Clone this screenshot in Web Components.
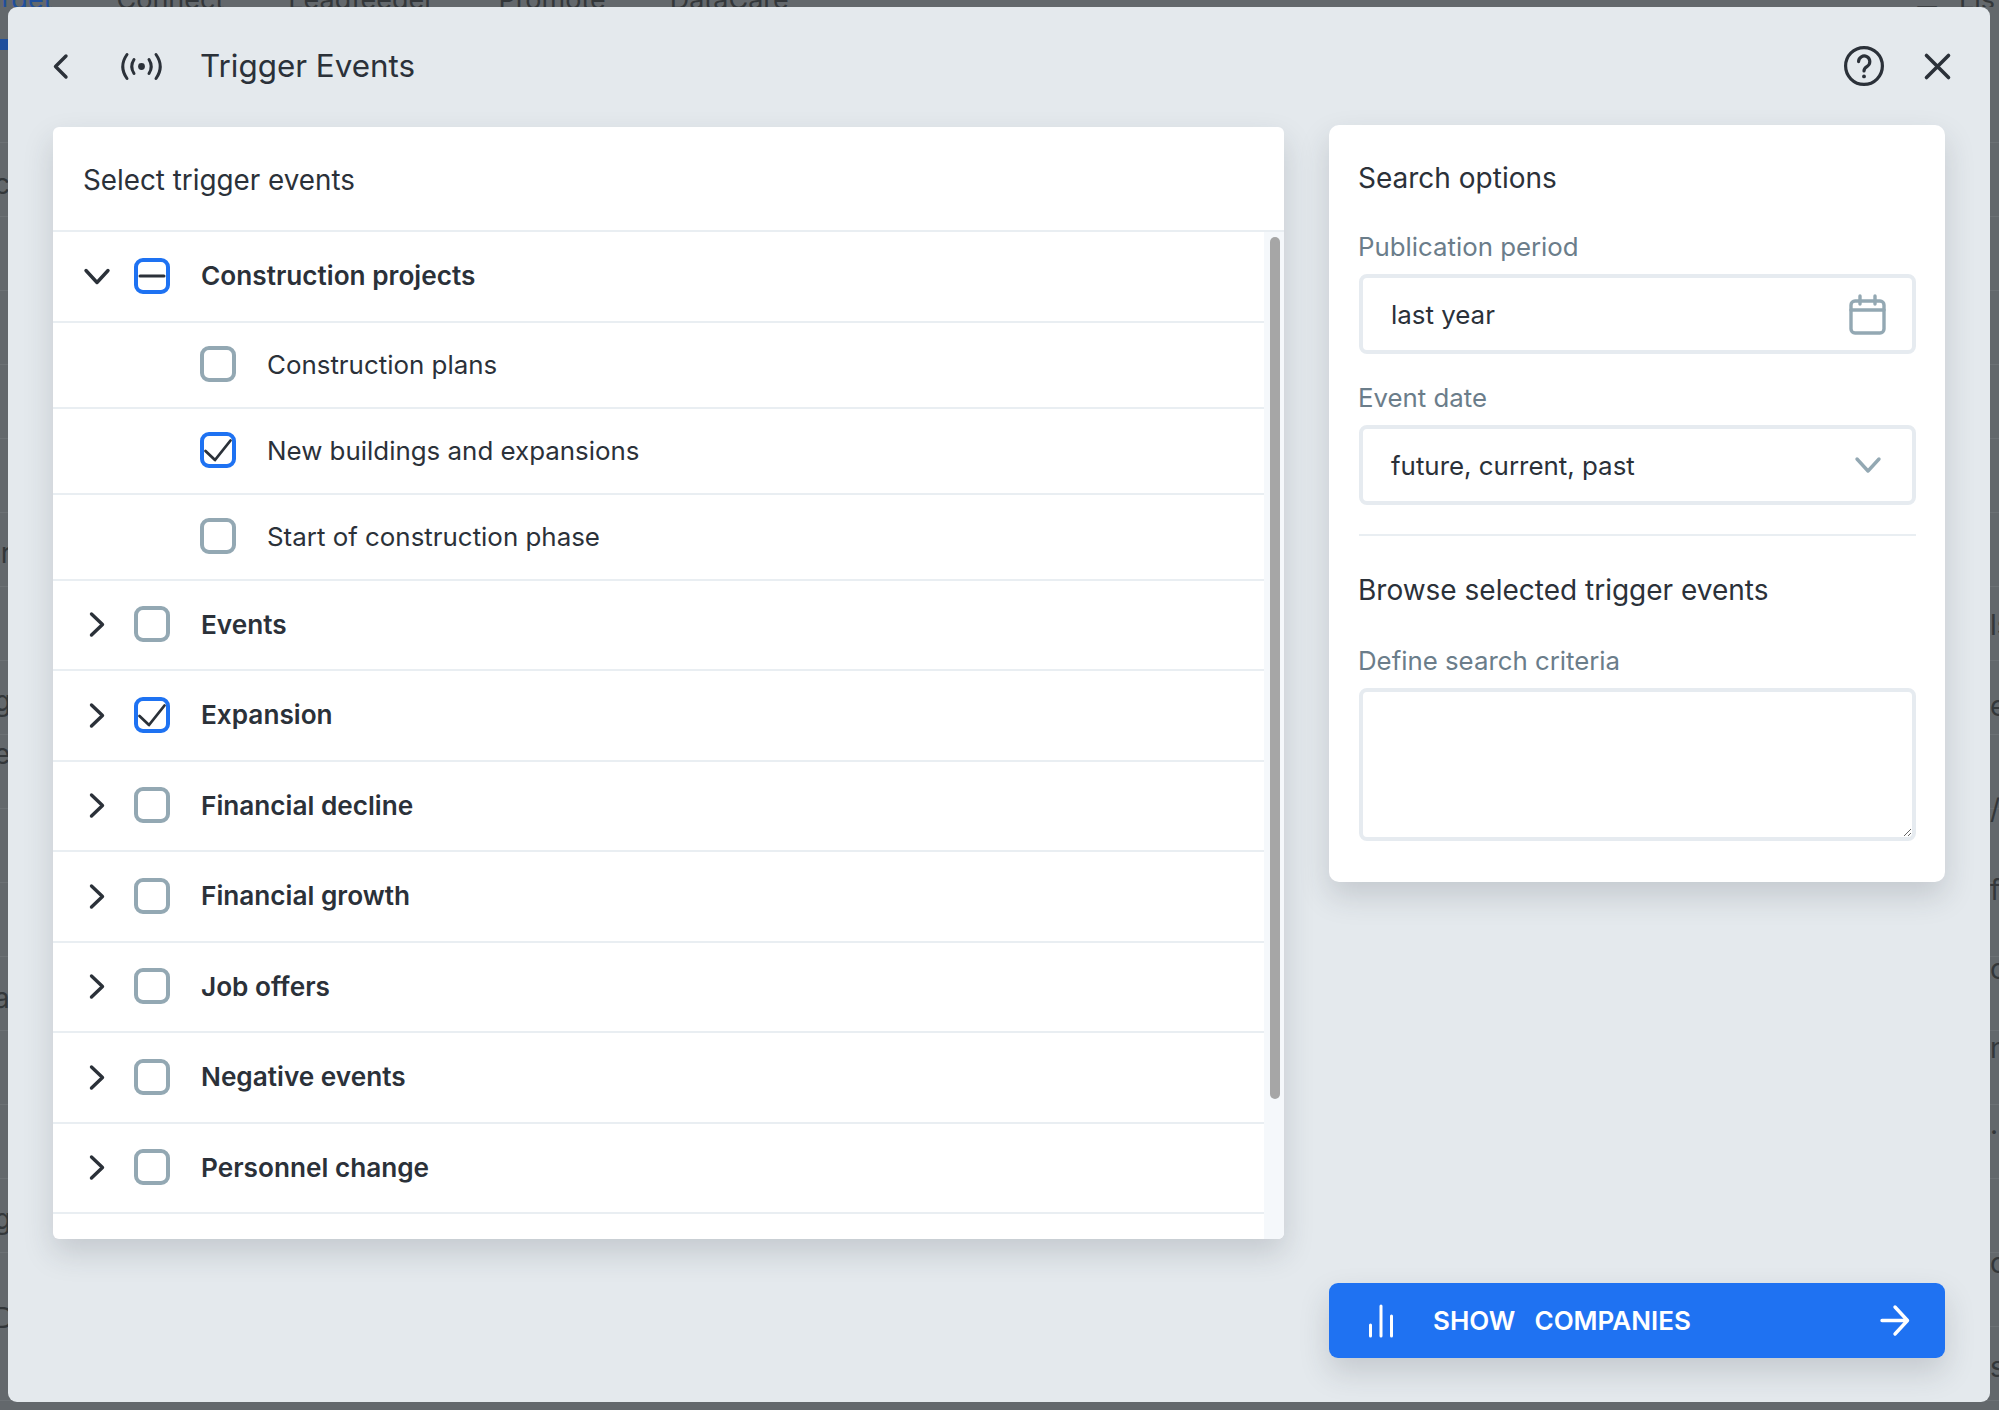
<!DOCTYPE html>
<html lang="en">
<head>
<meta charset="utf-8">
<title>Trigger Events</title>
<style>
    html, body {
        margin: 0;
        height: 100%;
        overflow: hidden;
    }

    body {
        background: #63686c;
        font-family: Inter, "Liberation Sans", sans-serif;
        color: #2b3139;
    }
</style>
</head>
<body>

<app-backdrop>
    <trigger-modal heading="Trigger Events">
        <tree-card slot="main" heading="Select trigger events">
            <tree-row kind="group" state="mixed" open>Construction projects</tree-row>
            <tree-row kind="child">Construction plans</tree-row>
            <tree-row kind="child" state="checked">New buildings and expansions</tree-row>
            <tree-row kind="child">Start of construction phase</tree-row>
            <tree-row kind="group">Events</tree-row>
            <tree-row kind="group" state="checked">Expansion</tree-row>
            <tree-row kind="group">Financial decline</tree-row>
            <tree-row kind="group">Financial growth</tree-row>
            <tree-row kind="group">Job offers</tree-row>
            <tree-row kind="group">Negative events</tree-row>
            <tree-row kind="group">Personnel change</tree-row>
        </tree-card>

        <search-card slot="side">
            <card-title>Search options</card-title>
            <form-field label="Publication period" value="last year" icon="calendar"></form-field>
            <form-field label="Event date" value="future, current, past" icon="select"></form-field>
            <hr-line></hr-line>
            <card-title>Browse selected trigger events</card-title>
            <form-field label="Define search criteria" multiline></form-field>
        </search-card>

        <show-button slot="action">SHOW&nbsp;&nbsp;COMPANIES</show-button>
    </trigger-modal>
</app-backdrop>

<script>
/**
 * All icons of the page, drawn on their own pixel grid.
 */
const ICONS = {
    back: {w: 15, h: 25, body: `<polyline points="13,2 2.5,12.5 13,23"/>`},
    broadcast: {w: 43, h: 27, body: `
        <circle cx="21.5" cy="13.5" r="3.4" fill="currentColor" stroke="none"/>
        <path d="M14 6.5 Q9.5 13.5 14 20.5"/>
        <path d="M29 6.5 Q33.5 13.5 29 20.5"/>
        <path d="M7 1.5 Q-1.5 13.5 7 25.5"/>
        <path d="M36 1.5 Q44.5 13.5 36 25.5"/>`},
    help: {w: 40, h: 40, body: `
        <circle cx="20" cy="20" r="18.4"/>
        <path d="M14.6 15.6 a5.6 5.6 0 1 1 8.6 4.7 c-2.2 1.4 -3.2 2.3 -3.2 4.6"/>
        <circle cx="20" cy="30.4" r="1.9" fill="currentColor" stroke="none"/>`},
    close: {w: 27, h: 27, body: `<path d="M2.5 2.5 L24.5 24.5 M24.5 2.5 L2.5 24.5"/>`},
    down: {w: 26, h: 17, body: `<polyline points="2,2.5 13,14.5 24,2.5"/>`},
    right: {w: 16, h: 25, body: `<polyline points="2.5,2 13.5,12.5 2.5,23"/>`},
    calendar: {w: 37, h: 41, body: `
        <rect x="2" y="7" width="33" height="32" rx="4"/>
        <path d="M2 16 H35 M11 2 V10 M26 2 V10"/>`},
    select: {w: 26, h: 16, body: `<polyline points="2,2 13,14 24,2"/>`},
    bars: {w: 26, h: 34, body: `<path d="M2.5 21 V32 M13 2 V32 M23.5 12 V32"/>`},
    arrow: {w: 30, h: 31, body: `<path d="M2 15.5 H27 M15 2 L27.5 15.5 L15 29"/>`},
    check: {w: 36, h: 36, body: `<polyline points="5.5,19 15,28 30.5,8.5"/>`},
    minus: {w: 36, h: 36, body: `<path d="M6 18 H30"/>`}
};

/**
 * Small helper so every element below stays a few lines long.
 */
function shadow(host, html) {
    host.attachShadow({mode: "open"});
    host.shadowRoot.innerHTML = html;
}

class UiIcon extends HTMLElement {
    connectedCallback() {
        if(this.shadowRoot) {
            return;
        }

        const icon = ICONS[this.getAttribute("name")];
        const stroke = this.getAttribute("stroke") || 3;

        shadow(this, `
            <style>
                :host { display: block; flex: none; line-height: 0; }
                svg { display: block; overflow: visible; fill: none; stroke: currentColor;
                    stroke-width: ${stroke}; stroke-linecap: round; stroke-linejoin: round; }
            </style>
            <svg width="${icon.w}" height="${icon.h}" viewBox="0 0 ${icon.w} ${icon.h}">${icon.body}</svg>
        `);
    }
}

/**
 * The page behind the dialog; only its edges stay visible.
 */
class AppBackdrop extends HTMLElement {
    constructor() {
        super();

        // letters of the table behind the dialog, with the y of their middle
        const leftRows = [["c", 184], ["lr", 553], ["g", 701], ["e", 754], ["a", 998], ["g", 1219], ["l", 1268], ["D", 1318]];
        const rightRows = [["ls", 625], ["e", 706], ["/c", 809], ["fc", 890], ["or", 969], ["n", 1048], [".", 1124], ["c", 1263], ["s", 1367]];

        const rows = (list, start) => {
            return list.map(([text, y], i) => {
                const top = i === 0 ? y - start - 17 : 0;
                const height = list[i + 1] ? list[i + 1][1] - y : 34;
                return `<div style="margin-top:${top}px;height:${height}px">${text}</div>`;
            }).join("");
        };

        shadow(this, `
            <style>
                :host { display: block; height: 100%; position: relative; overflow: hidden; }
                nav { display: flex; gap: 64px; height: 7px; overflow: hidden; color: #33373a;
                    font-size: 27px; line-height: 0; padding-left: 121px; }
                nav span { white-space: nowrap; }
                nav .current { color: #1f4f9c; margin-left: -150px; }
                .tools { margin-left: auto; display: flex; gap: 20px; padding-right: 4px; }
                .edge { display: flex; justify-content: space-between; height: 1403px; color: #33373a; font-size: 28px;
                    background: repeating-linear-gradient(transparent 0 73px, #6c7175 73px 74px) 0 62px; }
                .col { line-height: 34px; white-space: nowrap; }
                .left { width: 8px; margin-left: -6px; }
                .right { width: 9px; }
                .mark { margin: 32px 0 0 6px; height: 11px; background: #1f4f9c; width: 8px; }
            </style>
            <nav>
                <span class="current">Target</span><span>Connect</span><span>Leadfeeder</span><span>Promote</span><span>DataCare</span>
                <div class="tools"><span>&#9776;</span><span>Lis</span></div>
            </nav>
            <div class="edge">
                <div class="col left"><div class="mark"></div>${rows(leftRows, 50)}</div>
                <div class="col right">${rows(rightRows, 7)}</div>
            </div>
            <slot></slot>
        `);
    }
}

class TriggerModal extends HTMLElement {
    constructor() {
        super();

        shadow(this, `
            <style>
                /* the dialog lies over the page */
                :host { display: flex; flex-direction: column; position: absolute; left: 8px; top: 7px;
                    width: 1982px; height: 1395px; box-sizing: border-box; padding: 0 45px 44px;
                    background: #e4e9ed; border-radius: 9px; color: #2b3139; }
                header { display: flex; align-items: center; height: 118px; flex: none; box-sizing: border-box; }
                h1 { margin: 2px 0 0 37px; font-size: 31.4px; font-weight: 400; line-height: 1; }
                .back { margin-right: 52px; }
                .help { margin-left: auto; }
                .close { margin: 0 -6px 0 40px; }
                .body { flex: 1; display: flex; gap: 45px; min-height: 0; }
                .left { width: 1231px; padding-top: 2px; padding-bottom: 119px; box-sizing: border-box; display: flex; }
                .left ::slotted(*) { flex: 1; }
                .right { width: 616px; display: flex; flex-direction: column; justify-content: space-between; }
            </style>
            <header>
                <ui-icon class="back" name="back" stroke="3.4"></ui-icon>
                <ui-icon name="broadcast"></ui-icon>
                <h1>${this.getAttribute("heading")}</h1>
                <ui-icon class="help" name="help" stroke="3.2"></ui-icon>
                <ui-icon class="close" name="close" stroke="3.6"></ui-icon>
            </header>
            <div class="body">
                <div class="left"><slot name="main"></slot></div>
                <div class="right"><slot name="side"></slot><slot name="action"></slot></div>
            </div>
        `);
    }
}

class TreeCard extends HTMLElement {
    constructor() {
        super();

        shadow(this, `
            <style>
                :host { display: flex; flex-direction: column; background: #fff; border-radius: 6px;
                    box-shadow: 0 14px 30px rgba(40, 50, 60, .17); overflow: hidden; }
                .title { flex: none; height: 105px; box-sizing: border-box; padding: 38px 0 0 30px; font-size: 27.8px;
                    line-height: 30px; border-bottom: 2px solid #e9eef2; }
                .scroller { flex: 1; min-height: 0; display: flex; }
                .list { flex: 1; min-width: 0; overflow: hidden; }
                .track { flex: none; width: 20px; background: #f5f8fb; padding: 5px 4px 0 6px; box-sizing: border-box; }
                .thumb { height: 862px; border-radius: 5px; background: #a6a6a6; }
            </style>
            <div class="title">${this.getAttribute("heading")}</div>
            <div class="scroller">
                <div class="list"><slot></slot></div>
                <div class="track"><div class="thumb"></div></div>
            </div>
        `);
    }
}

class TreeRow extends HTMLElement {
    constructor() {
        super();

        const child = this.getAttribute("kind") === "child";
        const chevron = this.hasAttribute("open")
            ? `<ui-icon class="chev" name="down" stroke="3.4"></ui-icon>`
            : `<ui-icon class="chev" name="right" stroke="3.4"></ui-icon>`;

        shadow(this, `
            <style>
                :host { display: flex; align-items: center; box-sizing: border-box; height: ${child ? 86 : 90.5}px;
                    padding-left: ${child ? 147 : 0}px; border-bottom: 2px solid #e9eef2; }
                .toggle { width: 81px; flex: none; display: flex; justify-content: center; padding-left: 6px; box-sizing: border-box; }
                check-box { margin: 0 31px ${child ? 2 : 1}px 0; }
                .label { font-size: ${child ? 25.9 : 26.2}px; font-weight: ${child ? 400 : 600}; line-height: 30px; }
            </style>
            ${child ? "" : `<div class="toggle">${chevron}</div>`}
            <check-box state="${this.getAttribute("state") || ""}"></check-box>
            <div class="label"><slot></slot></div>
        `);
    }
}

class CheckBox extends HTMLElement {
    constructor() {
        super();

        const state = this.getAttribute("state");
        const mark = state === "checked" ? "check" : state === "mixed" ? "minus" : "";

        shadow(this, `
            <style>
                :host { display: block; position: relative; flex: none; width: 36px; height: 36px; box-sizing: border-box;
                    border: 4px solid ${mark ? "#1e72f2" : "#93a8b3"}; border-radius: 9px; color: #2b3139; }
                ui-icon { position: absolute; left: -4px; top: -4px; }
            </style>
            ${mark ? `<ui-icon name="${mark}" stroke="${mark === "check" ? 2.8 : 3}"></ui-icon>` : ""}
        `);
    }
}

class SearchCard extends HTMLElement {
    constructor() {
        super();

        shadow(this, `
            <style>
                :host { display: flex; flex-direction: column; height: 757px; box-sizing: border-box; padding: 38px 29px 0 30px;
                    background: #fff; border-radius: 10px; box-shadow: 0 14px 30px rgba(40, 50, 60, .17); }
            </style>
            <slot></slot>
        `);
    }
}

class CardTitle extends HTMLElement {
    constructor() {
        super();

        shadow(this, `
            <style>
                :host { display: block; font-size: 28px; line-height: 30px; margin: 0 0 10px -1px; }
            </style>
            <slot></slot>
        `);
    }
}

class HrLine extends HTMLElement {
    constructor() {
        super();

        shadow(this, `
            <style>
                :host { display: block; flex: none; height: 2px; background: #e9eef2; margin: 29px 0 39px; }
            </style>
        `);
    }
}

class FormField extends HTMLElement {
    constructor() {
        super();

        const icon = this.getAttribute("icon");
        const iconHtml = icon ? `<ui-icon name="${icon}" stroke="3.4"></ui-icon>` : "";
        const control = this.hasAttribute("multiline")
            ? `<textarea aria-label="${this.getAttribute("label")}"></textarea>`
            : `<div class="box"><span>${this.getAttribute("value")}</span>${iconHtml}</div>`;

        shadow(this, `
            <style>
                :host { display: block; margin-top: 29px; }
                :host([multiline]) { margin-top: 30.5px; }
                label { display: block; font-size: 25.8px; line-height: 30px; color: #6b7d8a; margin: 0 0 12px -1px; }
                .box { display: flex; align-items: center; justify-content: space-between; height: 80px; box-sizing: border-box;
                    padding: 0 26px 0 28px; border: 4px solid #e6ebf0; border-radius: 8px; font-size: 25.9px; color: #2b3139; }
                ui-icon { color: #93a8b3; }
                ui-icon[name="select"] { margin-right: 5px; }
                textarea { display: block; width: 100%; height: 153px; box-sizing: border-box; margin: 0;
                    border: 4px solid #e6ebf0; border-radius: 8px; outline: none; background: #fff; }
            </style>
            <label>${this.getAttribute("label")}</label>
            ${control}
        `);
    }
}

class ShowButton extends HTMLElement {
    constructor() {
        super();

        shadow(this, `
            <style>
                :host { display: flex; align-items: center; height: 75px; box-sizing: border-box; padding: 0 35px 0 39px;
                    background: #1f72f2; color: #fff; border-radius: 9px;
                    box-shadow: 0 14px 30px rgba(40, 50, 60, .17); }
                .text { margin-left: 39px; font-size: 26px; font-weight: 600; word-spacing: 3px; }
                ui-icon[name="arrow"] { margin-left: auto; }
            </style>
            <ui-icon name="bars"></ui-icon>
            <span class="text"><slot></slot></span>
            <ui-icon name="arrow" stroke="3.4"></ui-icon>
        `);
    }
}

customElements.define("ui-icon", UiIcon);
customElements.define("check-box", CheckBox);
customElements.define("app-backdrop", AppBackdrop);
customElements.define("trigger-modal", TriggerModal);
customElements.define("tree-card", TreeCard);
customElements.define("tree-row", TreeRow);
customElements.define("search-card", SearchCard);
customElements.define("card-title", CardTitle);
customElements.define("hr-line", HrLine);
customElements.define("form-field", FormField);
customElements.define("show-button", ShowButton);
</script>
</body>
</html>
